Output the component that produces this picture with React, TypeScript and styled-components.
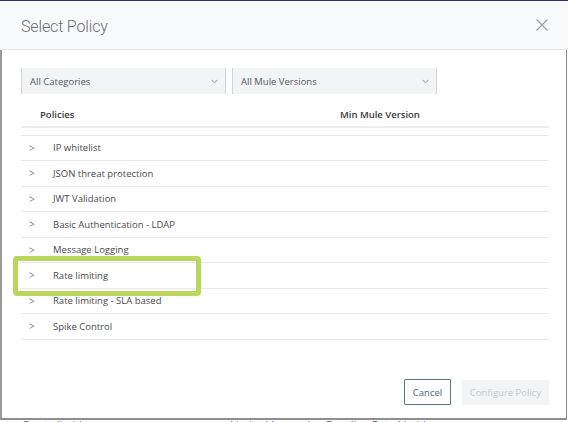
import React from "react";
import styled, { createGlobalStyle } from "styled-components";

const Global = createGlobalStyle`
  html, body { margin: 0; padding: 0; background: #ffffff; }
  body { width: 568px; height: 422px; overflow: hidden; font-family: "Open Sans", "Liberation Sans", sans-serif; }
  * { box-sizing: border-box; }
`;

const Frame = styled.div`
  position: relative;
  width: 568px;
  height: 422px;
  border-top: 1px solid #3b2d60;
  display: flex;
  flex-direction: column;
  background: #ffffff;
  overflow: hidden;
`;

const Header = styled.div`
  height: 49px;
  flex: none;
  background: #f8f9fb;
  border-bottom: 1px solid #e3e5e9;
  display: flex;
  align-items: center;
  justify-content: space-between;
  padding: 3px 20px 0 21px;
`;

const Title = styled.h1`
  margin: 0;
  font-family: Roboto, "Liberation Sans", sans-serif;
  font-weight: 300;
  font-size: 16px;
  letter-spacing: -0.15px;
  color: #6b6d70;
`;

const CloseButton = styled.button`
  border: 0;
  background: transparent;
  padding: 0;
  width: 12px;
  height: 12px;
  margin-bottom: 4px;
  display: flex;
  cursor: pointer;
`;

const Body = styled.div`
  height: 370px;
  flex: none;
  width: 567px;
  border-left: 2px solid #9a9a9a;
  border-right: 1px solid #8a8a8a;
  border-bottom: 2px solid #8e8e8e;
  padding: 18px 17px 13px 19px;
  display: flex;
  flex-direction: column;
`;

const Filters = styled.div`
  display: flex;
  gap: 6px;
  height: 26px;
`;

const Select = styled.div`
  width: 205px;
  height: 26px;
  background: #f3f4f6;
  border-left: 1px solid #d3d4d6;
  border-right: 1px solid #d3d4d6;
  display: flex;
  align-items: center;
  justify-content: space-between;
  padding: 0 7px 0 8px;
  font-size: 9.5px;
  color: #555860;
`;

const TableHeader = styled.div`
  margin-top: 8px;
  height: 26px;
  border-bottom: 2px solid #ededed;
  display: grid;
  grid-template-columns: 300px 1fr;
  align-items: center;
  padding: 1px 0 0 19px;
  font-size: 9.5px;
  font-weight: 600;
  color: #3a3a3a;
`;

const Viewport = styled.div`
  height: 220px;
  display: flex;
  overflow: hidden;
`;

const List = styled.div`
  flex: 1;
`;

const RowTail = styled.div`
  height: 7.5px;
  border-bottom: 1px solid #e7e8ea;
`;

const Row = styled.div`
  height: 25.5px;
  border-bottom: 1px solid #e7e8ea;
  display: grid;
  grid-template-columns: 24px 287px 1fr;
  align-items: center;
  padding-left: 8px;
  font-size: 9.5px;
  color: #4a4b4e;
`;

const Chevron = styled.span`
  color: #7a7a7a;
  font-size: 10px;
`;

const Faint = styled.span`
  color: #b4b4b4;
  margin-left: -40px;
  white-space: nowrap;
`;

const Track = styled.div`
  width: 14px;
  flex: none;
  background: #f7f7f8;
  border-left: 1px solid #e6e6e8;
  border-right: 1px solid #ececee;
  padding-top: 103px;
  display: flex;
  flex-direction: column;
  align-items: center;
`;

const Thumb = styled.div`
  width: 7px;
  height: 94px;
  border-radius: 4px;
  background: #c4c4c4;
`;

const Footer = styled.div`
  margin-top: 31px;
  display: flex;
  justify-content: flex-end;
  align-items: flex-start;
  gap: 11px;
`;

const Button = styled.button<{ $primary?: boolean }>`
  height: ${(p) => (p.$primary ? "25px" : "26px")};
  width: ${(p) => (p.$primary ? "87px" : "47px")};
  margin-top: ${(p) => (p.$primary ? "1px" : "0")};
  padding: 0;
  font-family: "Open Sans", "Liberation Sans", sans-serif;
  font-size: 9.5px;
  border-radius: 1px;
  border: 1px solid ${(p) => (p.$primary ? "#f3f4f6" : "#5d7686")};
  background: ${(p) => (p.$primary ? "#f3f4f6" : "#ffffff")};
  color: ${(p) => (p.$primary ? "#c6c8cc" : "#4d6372")};
`;

const Backdrop = styled.div`
  height: 2px;
  flex: none;
  overflow: hidden;
  display: flex;
  padding-left: 22px;
  font-size: 11px;
  line-height: 12px;
  color: #555;
`;

const BackItem = styled.span<{ $w: number }>`
  width: ${(p) => p.$w}px;
  flex: none;
  margin-top: -1px;
  white-space: nowrap;
`;

const Highlight = styled.div`
  position: absolute;
  left: 13px;
  top: 255px;
  width: 188px;
  height: 40px;
  border: 5px solid #bad65c;
  border-radius: 4px;
  pointer-events: none;
`;

const SelectArrow = () => (
  <svg width="7" height="5" viewBox="0 0 7 5">
    <polyline points="0.5,0.8 3.5,4 6.5,0.8" fill="none" stroke="#8a8c90" strokeWidth="0.9" />
  </svg>
);

const policies = [
  "IP whitelist",
  "JSON threat protection",
  "JWT Validation",
  "Basic Authentication - LDAP",
  "Message Logging",
  "Rate limiting",
  "Rate limiting - SLA based",
  "Spike Control",
  "Throttling",
];

export default function App() {
  return (
    <>
      <Global />
      <Frame>
        <Header>
          <Title>Select Policy</Title>
          <CloseButton aria-label="Close">
            <svg width="12" height="12" viewBox="0 0 12 12">
              <path d="M0.5 0.5 L11.5 11.5 M11.5 0.5 L0.5 11.5" stroke="#9c9ea2" strokeWidth="1.1" fill="none" />
            </svg>
          </CloseButton>
        </Header>
        <Body>
          <Filters>
            <Select>
              All Categories
              <SelectArrow />
            </Select>
            <Select>
              All Mule Versions
              <SelectArrow />
            </Select>
          </Filters>
          <TableHeader>
            <span>Policies</span>
            <span>Min Mule Version</span>
          </TableHeader>
          <Viewport>
            <List>
              <RowTail />
              {policies.map((name, i) => (
                <Row key={name}>
                  <Chevron>&gt;</Chevron>
                  <span>{name}</span>
                  {i === policies.length - 1 ? (
                    <Faint>Unavailable: requires a newer Mule runtime than selected</Faint>
                  ) : (
                    <span />
                  )}
                </Row>
              ))}
            </List>
            <Track>
              <Thumb />
            </Track>
          </Viewport>
          <Footer>
            <Button>Cancel</Button>
            <Button $primary>Configure Policy</Button>
          </Footer>
        </Body>
        <Backdrop>
          <BackItem $w={208}>Quota limiting ■</BackItem>
          <BackItem $w={96}>Limited by service</BackItem>
          <BackItem $w={200}>Baseline Rate Limiting</BackItem>
        </Backdrop>
        <Highlight />
      </Frame>
    </>
  );
}
